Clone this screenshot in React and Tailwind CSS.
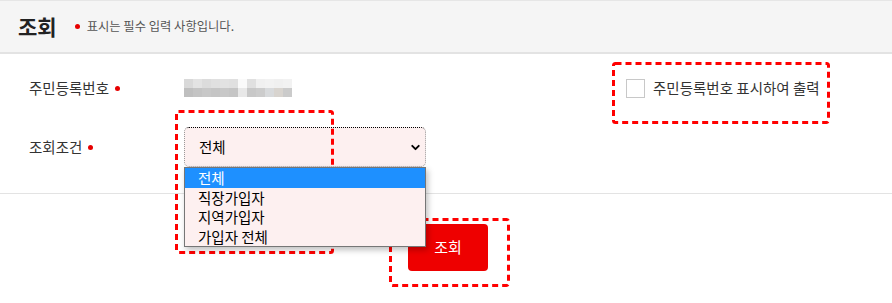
import React from "react";
import { ChevronDown } from "lucide-react";

const blurTop = [
  "bg-[#d9d9d9]", "bg-[#e3e3e3]", "bg-[#dcdcdc]", "bg-[#e0e0e0]", "bg-[#e2e2e2]", "bg-[#e0e0e0]",
  "bg-[#fafafa]", "bg-[#e0e0e0]", "bg-[#f0f0f0]", "bg-[#f2f2f2]", "bg-[#f0f0f0]", "bg-[#f2f2f2]",
];
const blurBottom = [
  "bg-[#bfbfbf]", "bg-[#c4c4c4]", "bg-[#c8c8c8]", "bg-[#c5c5c5]", "bg-[#c8c8c8]", "bg-[#c5c5c5]",
  "bg-[#e8e8e8]", "bg-[#c8c8c8]", "bg-[#cccccc]", "bg-[#d8dadc]", "bg-[#d8d4cf]", "bg-[#cbcbcb]",
];

const options = ["전체", "직장가입자", "지역가입자", "가입자 전체"];

// red dashed annotation boxes drawn over the page
const DashBox = ({ className }) => (
  <svg className={"absolute pointer-events-none " + className} preserveAspectRatio="none">
    <rect x="1.5" y="1.5" width="calc(100% - 3px)" height="calc(100% - 3px)" rx="2" fill="none" stroke="#ff0000" strokeWidth="3" strokeDasharray="6 4" />
  </svg>
);

const RequiredDot = () => <span className="inline-block w-[5px] h-[5px] rounded-full bg-[#e60000]" />;

const App = () => {
  return (
    <div className="relative w-[892px] h-[303px] bg-white overflow-hidden text-[#333] font-['Noto_Sans_CJK_KR','Noto_Sans',sans-serif]">
      {/* Header */}
      <div className="h-[54px] bg-[#f5f5f5] border-t border-[#e6e6e6] border-b-2 border-b-[#e3e3e3] flex items-center pl-[18px]">
        <h1 className="text-[21px] font-bold text-[#222] leading-none">조회</h1>
        <div className="flex items-center ml-[18px] gap-[7px]">
          <RequiredDot />
          <span className="text-[12.3px] text-[#555]">표시는 필수 입력 사항입니다.</span>
        </div>
      </div>

      {/* Form */}
      <div className="border-b border-[#e3e3e3] pt-[14px] pb-[26px] text-[14.5px]">
        <div className="flex items-center h-[40px] pl-[29px]">
          <div className="w-[155px] flex items-center gap-[6px]">
            주민등록번호 <RequiredDot />
          </div>
          <div className="flex flex-col w-[108px]">
            <div className="flex h-[9px]">
              {blurTop.map((c, i) => (
                <div key={i} className={"w-[9px] h-full " + c} />
              ))}
            </div>
            <div className="flex h-[9px]">
              {blurBottom.map((c, i) => (
                <div key={i} className={"w-[9px] h-full " + c} />
              ))}
            </div>
          </div>
          <label className="ml-[334px] flex items-center gap-[8px]">
            <span className="w-[19px] h-[19px] border border-[#c8c8c8] bg-white" />
            주민등록번호 표시하여 출력
          </label>
        </div>

        <div className="flex items-center h-[40px] mt-[19px] pl-[29px]">
          <div className="w-[155px] flex items-center gap-[6px]">
            조회조건 <RequiredDot />
          </div>
          <div className="relative w-[242px] h-[40px]">
            <div className="h-full rounded-[5px] border border-[#9a9a9a] border-t-black border-dotted bg-[#fdf0f0] flex items-center justify-between pl-[14px] pr-[3px] text-black">
              전체
              <ChevronDown size={13} strokeWidth={3.5} className="text-black" />
            </div>
            <ul className="absolute left-0 top-full w-full z-10 bg-[#fdf0f0] border border-[#767676] shadow-[2px_3px_6px_rgba(0,0,0,0.25)] text-black leading-[19.5px]">
              {options.map((o, i) => (
                <li key={o} className={"pl-[13px] " + (i === 0 ? "bg-[#1e90ff] text-white" : "")}>
                  {o}
                </li>
              ))}
            </ul>
          </div>
        </div>
      </div>

      {/* Button */}
      <div className="flex justify-center pt-[30px] pl-[4px]">
        <button className="w-[80px] h-[47px] rounded-[4px] bg-[#ee0000] text-white text-[15px]">조회</button>
      </div>

      <DashBox className="left-[175px] top-[110px] w-[159px] h-[144px]" />
      <DashBox className="left-[389px] top-[218px] w-[121px] h-[69px]" />
      <DashBox className="left-[612px] top-[62px] w-[218px] h-[62px]" />
    </div>
  );
};

export default App;
